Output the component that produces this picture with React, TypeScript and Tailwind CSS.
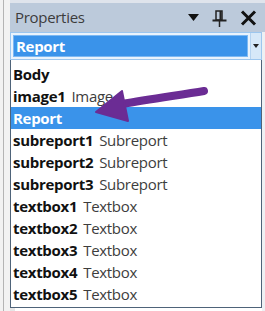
import React from 'react';

type Item = { name: string; type?: string; selected?: boolean };

const items: Item[] = [
  { name: 'Body' },
  { name: 'image1', type: 'Image' },
  { name: 'Report', selected: true },
  { name: 'subreport1', type: 'Subreport' },
  { name: 'subreport2', type: 'Subreport' },
  { name: 'subreport3', type: 'Subreport' },
  { name: 'textbox1', type: 'Textbox' },
  { name: 'textbox2', type: 'Textbox' },
  { name: 'textbox3', type: 'Textbox' },
  { name: 'textbox4', type: 'Textbox' },
  { name: 'textbox5', type: 'Textbox' },
];

const PinIcon = () => (
  <svg width="15" height="17" viewBox="0 0 15 17">
    <path d="M4 1h6v9H4z" fill="none" stroke="#222" strokeWidth="1.5" />
    <path d="M8.5 1v9" stroke="#222" strokeWidth="2" />
    <path d="M0.5 10.5h14" stroke="#222" strokeWidth="2" />
    <path d="M7.5 11v6" stroke="#222" strokeWidth="1.5" />
  </svg>
);

const CloseIcon = () => (
  <svg width="17" height="16" viewBox="0 0 17 16">
    <path d="M2 1.5l13 13M15 1.5l-13 13" stroke="#111" strokeWidth="3" />
  </svg>
);

export default function App() {
  return (
    <div
      className="relative w-[265px] h-[311px] overflow-hidden flex bg-[#eef0f3]"
      style={{ fontFamily: '"Open Sans", "Noto Sans", sans-serif' }}
    >
      {/* left dock edge */}
      <div className="w-[10px] flex shrink-0">
        <div className="w-[3px] bg-[#f2f2f2]" />
        <div className="w-px bg-[#b4b4b4]" />
        <div className="flex-1 bg-[#f2f2f2]" />
      </div>

      <div className="flex-1 flex flex-col min-w-0">
        {/* title bar */}
        <div className="h-[3px] shrink-0 bg-[#dfe4ec]" />
        <div className="h-[29px] shrink-0 bg-[#bccadb] flex items-center pl-[5px] pr-[8px]">
          <span className="text-[15px] text-[#3c3c3c] tracking-[-0.3px]">Properties</span>
          <div className="ml-auto flex items-center">
            <svg width="11" height="7" viewBox="0 0 11 7" className="mr-[13px]">
              <path d="M0 0h11L5.5 7z" fill="#111" />
            </svg>
            <div className="mr-[13px] mt-[1px]">
              <PinIcon />
            </div>
            <CloseIcon />
          </div>
        </div>

        <div className="flex-1 flex flex-col pr-[3px]">
          {/* combo box */}
          <div className="h-[28px] shrink-0 flex border border-[#9cc6ee] bg-[#eaf3fc]">
            <div className="flex-1 p-[2px]">
              <div className="h-full bg-[#3a93ea] border border-[#7cb8f2] flex items-center pl-[2px]">
                <span className="text-[15px] font-bold text-white tracking-[-0.3px]">Report</span>
              </div>
            </div>
            <div className="w-[11px] bg-[#d6e8f8] border-l border-[#b5d3f0] flex items-center justify-center">
              <svg width="6" height="4" viewBox="0 0 6 4">
                <path d="M0 0h6L3 4z" fill="#222" />
              </svg>
            </div>
          </div>

          {/* dropdown list */}
          <div className="shrink-0 bg-white border border-[#4e6379] border-t-0 pt-[3px] pb-[2px]">
            {items.map((it) => (
              <div
                key={it.name}
                className={`h-[22px] flex items-center pl-[2px] text-[15px] leading-none tracking-[-0.3px] ${
                  it.selected ? 'bg-[#3a93ea] text-white' : 'text-[#111]'
                }`}
              >
                <span className="font-bold">{it.name}</span>
                {it.type && <span className="ml-[6px] text-[#3d3d3d]">{it.type}</span>}
              </div>
            ))}
          </div>

          {/* property grid row peeking below */}
          <div className="shrink-0 flex bg-white border-l-[5px] border-[#e6e6e6] h-[20px] text-[15px] leading-[20px] tracking-[-0.3px]">
            <span className="pl-[18px] w-[118px] text-[#333]">Author</span>
            <span className="font-bold text-[#111]">Enhansott</span>
          </div>
        </div>
      </div>

      {/* purple annotation arrow */}
      <svg
        className="absolute left-0 top-0 pointer-events-none"
        width="265"
        height="311"
        viewBox="0 0 265 311"
      >
        <path d="M204 91 C180 95 150 99 122 104" stroke="#6b2c94" strokeWidth="8" strokeLinecap="round" fill="none" />
        <path d="M96 112 L122 91 L128 121 Z" fill="#6b2c94" stroke="#6b2c94" strokeWidth="2" strokeLinejoin="round" />
      </svg>
    </div>
  );
}
